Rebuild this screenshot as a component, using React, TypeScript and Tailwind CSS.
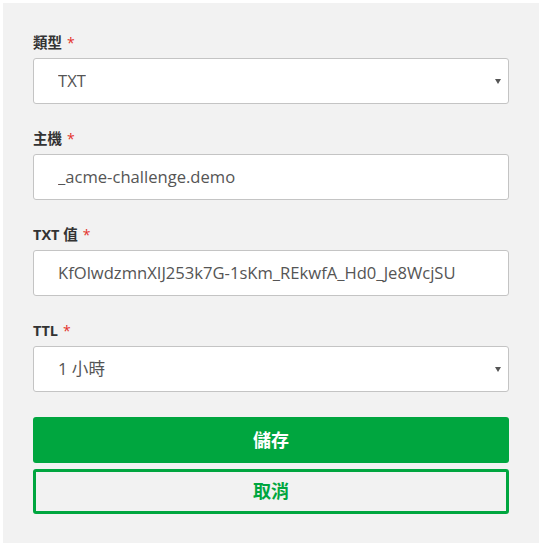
const FONT = "font-['Open_Sans','Noto_Sans_CJK_TC',sans-serif]";

function Label({ text }: { text: string }) {
  return (
    <div className="h-5 flex items-center mb-[5px] text-[14.5px] font-bold text-[#333] leading-5">
      <span>{text}</span>
      <span className="ml-[5px] text-[#e4322b] text-[14px] font-normal">*</span>
    </div>
  );
}

function Field({ label, value, select }: { label: string; value: string; select?: boolean }) {
  return (
    <div className="mb-[25px]">
      <Label text={label} />
      <div className="h-[46px] flex items-center bg-white border border-[#c4c4c4] rounded-[3px] pl-6 pr-[7px] text-[16.6px] text-[#555]">
        <span className="truncate">{value}</span>
        {select && (
          <span className="ml-auto w-0 h-0 border-l-[3.5px] border-r-[3.5px] border-t-[5px] border-l-transparent border-r-transparent border-t-[#555]" />
        )}
      </div>
    </div>
  );
}

export default function App() {
  return (
    <div className={`min-h-[543px] pt-[3px] pl-[3px] bg-white ${FONT}`}>
      <div className="bg-[#f2f2f2] min-h-[540px] px-[30px] pt-[30px] pb-[30px]">
        <Field label="類型" value="TXT" select />
        <Field label="主機" value="_acme-challenge.demo" />
        <Field label="TXT 值" value="KfOlwdzmnXIJ253k7G-1sKm_REkwfA_Hd0_Je8WcjSU" />
        <Field label="TTL" value="1 小時" select />
        <button className="w-full h-[46px] bg-[#00a63f] rounded-[3px] text-white text-[18px] font-bold">
          儲存
        </button>
        <button className="mt-[6px] w-full h-[45px] border-[3px] border-[#00a63f] rounded-[3px] text-[#00a63f] text-[18px] font-bold">
          取消
        </button>
      </div>
    </div>
  );
}
